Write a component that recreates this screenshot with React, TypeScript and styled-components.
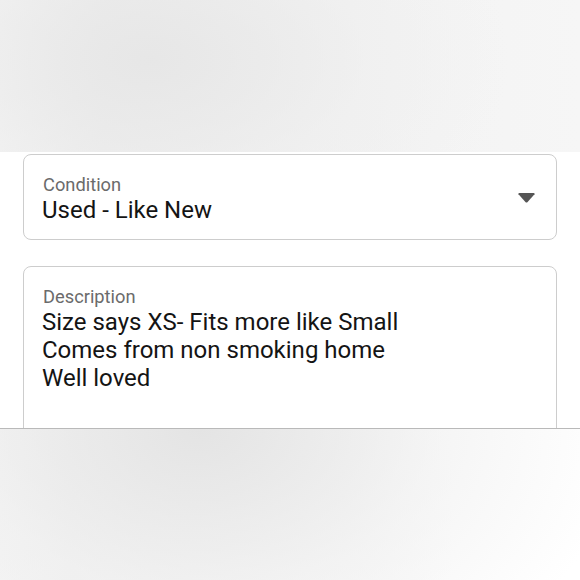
import React from "react";
import styled, { createGlobalStyle } from "styled-components";

const Global = createGlobalStyle`
  html, body { margin: 0; padding: 0; }
  body { font-family: Roboto, "Noto Sans", "Liberation Sans", sans-serif; background: #fff; }
`;

const Page = styled.div`
  width: 580px;
  height: 580px;
  display: flex;
  flex-direction: column;
  overflow: hidden;
`;

const Blur = styled.div<{ $h: number; $bottom?: boolean }>`
  height: ${(p) => p.$h}px;
  flex: none;
  background: ${(p) =>
    p.$bottom
      ? `radial-gradient(ellipse 420px 300px at 200px 0px, rgba(226,226,226,0.9), rgba(238,238,238,0.6) 55%, rgba(255,255,255,0) 100%),
         linear-gradient(90deg, #f6f6f6 0%, #f3f3f3 12%, #fafafa 60%, #ffffff 78%, #ffffff 100%)`
      : `radial-gradient(ellipse 360px 220px at 150px 60px, rgba(230,230,230,0.9), rgba(238,238,238,0.5) 60%, rgba(245,245,245,0) 100%),
         linear-gradient(90deg, #f3f3f3 0%, #ececec 18%, #f0f0f0 45%, #f4f4f4 75%, #f6f6f6 100%)`};
`;

const Sheet = styled.div`
  height: 274px;
  flex: none;
  background: #fff;
  border-bottom: 1px solid #b9b9b9;
  padding: 2px 23px 0 23px;
  display: flex;
  flex-direction: column;
  gap: 26px;
  overflow: hidden;
`;

const Field = styled.div<{ $h?: number }>`
  box-sizing: border-box;
  flex: none;
  height: ${(p) => (p.$h ? `${p.$h}px` : "auto")};
  border: 1px solid #cdcdcd;
  border-radius: 8px;
  padding: 18px 19px 0 18px;
  display: flex;
  align-items: flex-start;
  justify-content: space-between;
`;

const FieldBody = styled.div`
  display: flex;
  flex-direction: column;
`;

const Label = styled.div`
  font-size: 18.3px;
  line-height: 23px;
  color: #6b6b6b;
  margin-left: 1px;
`;

const Value = styled.div`
  font-size: 24px;
  line-height: 28px;
  color: #141414;
  white-space: pre-line;
`;

const Caret = styled.svg`
  margin-top: 20px;
  margin-right: 2px;
  flex: none;
`;

export default function App() {
  return (
    <Page>
      <Global />
      <Blur $h={152} />
      <Sheet>
        <Field $h={86}>
          <FieldBody>
            <Label>Condition</Label>
            <Value>Used - Like New</Value>
          </FieldBody>
          <Caret width="17" height="10" viewBox="0 0 17 10">
            <path d="M0.5 1.2 Q0 0 1.4 0 H15.6 Q17 0 16.5 1.2 L9.4 9.2 Q8.5 10 7.6 9.2 Z" fill="#555" />
          </Caret>
        </Field>
        <Field $h={200}>
          <FieldBody>
            <Label>Description</Label>
            <Value>{"Size says XS- Fits more like Small\nComes from non smoking home\nWell loved"}</Value>
          </FieldBody>
        </Field>
      </Sheet>
      <Blur $h={153} $bottom />
    </Page>
  );
}
